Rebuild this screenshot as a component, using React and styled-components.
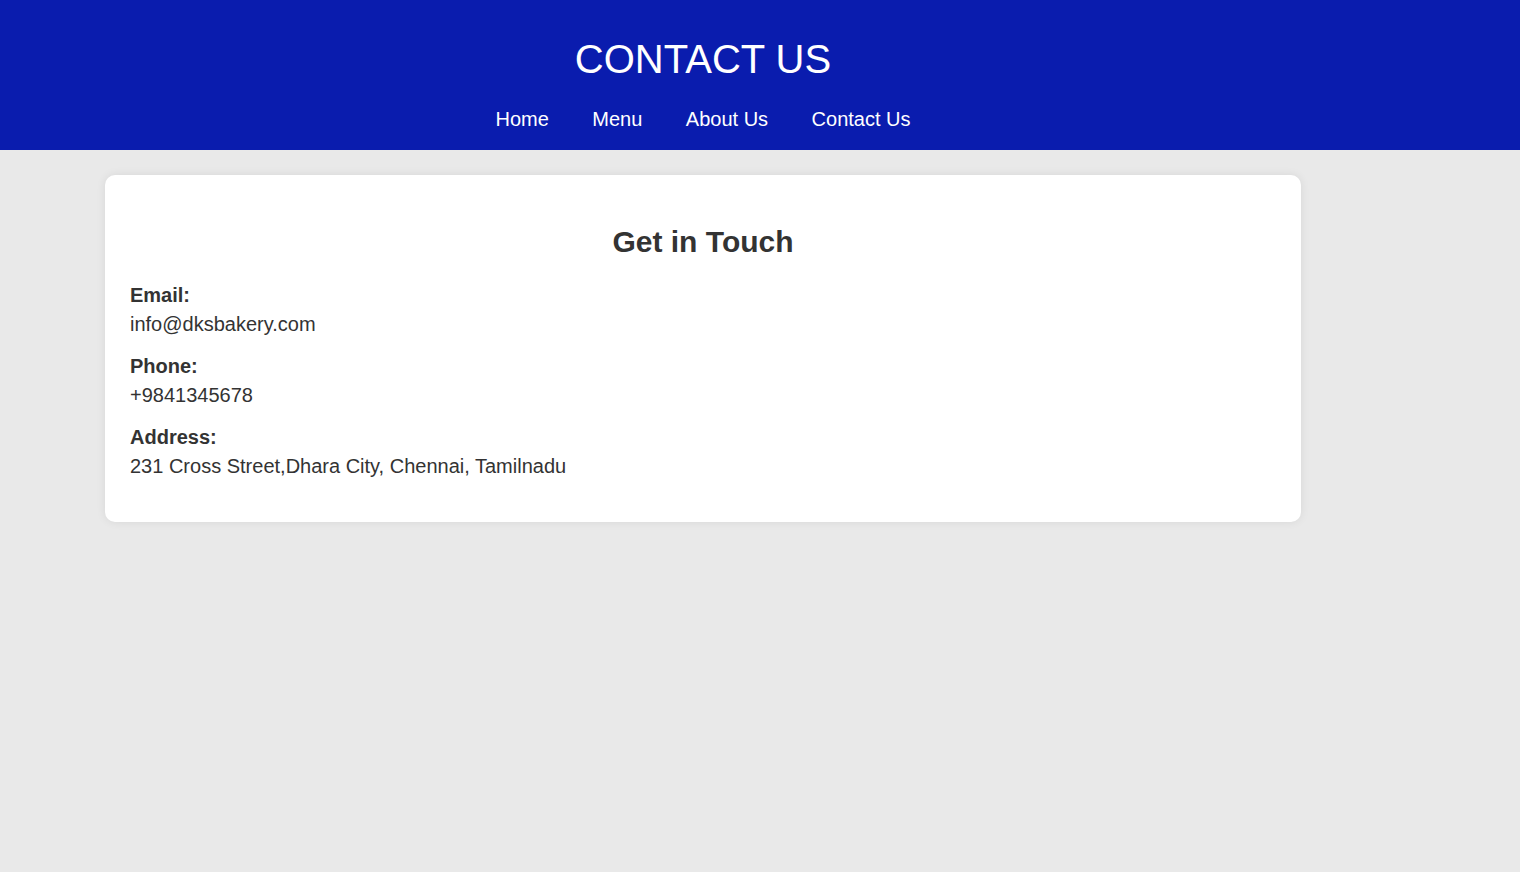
import React from "react";
import styled, { createGlobalStyle } from "styled-components";

const navLinks = ["Home", "Menu", "About Us", "Contact Us"];

const details = [
    { label: "Email:", value: "info@dksbakery.com" },
    { label: "Phone:", value: "+9841345678" },
    { label: "Address:", value: "231 Cross Street,Dhara City, Chennai, Tamilnadu" }
];

const App = () => {
    return (
        <>
            <GlobalStyle />
            <Header>
                <Shell>
                    <Title>CONTACT US</Title>
                    <Nav>
                        {navLinks.map(link => (
                            <NavLink key={link} href="#">
                                {link}
                            </NavLink>
                        ))}
                    </Nav>
                </Shell>
            </Header>

            <Main>
                <Card>
                    <Heading>Get in Touch</Heading>
                    {details.map(item => (
                        <Detail key={item.label}>
                            <Label>{item.label}</Label>
                            <Value>{item.value}</Value>
                        </Detail>
                    ))}
                </Card>
            </Main>
        </>
    );
};

const GlobalStyle = createGlobalStyle`
    html, body {
        margin: 0;
        padding: 0;
        background: #e9e9e9;
        font-family: "Liberation Sans", Arial, sans-serif;
        color: #333;
    }
    body {
        min-height: 100vh;
    }
`;

const Header = styled.header`
    background: #0a1cae;
    color: #fff;
    height: 150px;
    padding-top: 36px;
    box-sizing: border-box;
`;

const Shell = styled.div`
    width: 1406px;
    text-align: center;
`;

const Title = styled.h1`
    margin: 0;
    font-size: 40px;
    font-weight: normal;
    line-height: 46px;
`;

const Nav = styled.nav`
    margin-top: 26px;
    display: flex;
    justify-content: center;
    gap: 43.5px;
`;

const NavLink = styled.a`
    color: #fff;
    text-decoration: none;
    font-size: 20px;
    line-height: 23px;
`;

const Main = styled.main`
    width: 1406px;
    padding-top: 25px;
`;

const Card = styled.section`
    width: 1196px;
    margin: 0 auto;
    box-sizing: border-box;
    background: #fff;
    border-radius: 10px;
    box-shadow: 0 0 10px rgba(0, 0, 0, 0.08);
    padding: 50px 25px 41px;
`;

const Heading = styled.h2`
    margin: 0 0 22px;
    text-align: center;
    font-size: 30px;
    line-height: 34px;
    font-weight: bold;
    color: #333;
`;

const Detail = styled.div`
    margin-bottom: 13px;
    font-size: 20px;
    line-height: 29px;

    &:last-child {
        margin-bottom: 0;
    }
`;

const Label = styled.div`
    font-weight: bold;
`;

const Value = styled.div`
    font-weight: normal;
`;

export default App;
